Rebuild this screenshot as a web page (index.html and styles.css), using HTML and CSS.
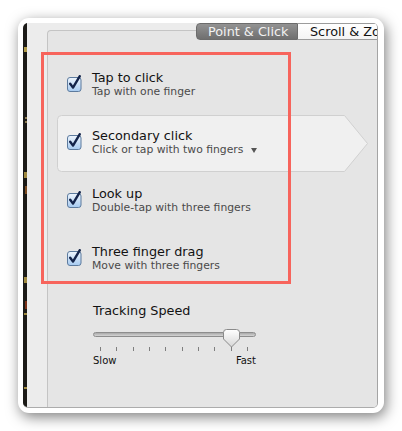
FILE: index.html
```html
<!DOCTYPE html>
<html>
<head>
<meta charset="utf-8">
<link rel="stylesheet" href="styles.css">
</head>
<body>
<div class="frame">
  <div class="window">
    <div class="strip"></div>
    <div class="main">
      <div class="tabs">
        <div class="tab active">Point &amp; Click</div>
        <div class="tab">Scroll &amp; Zoom</div>
      </div>
      <div class="panel">
        <div class="list">
          <div class="row">
            <svg class="cb" width="15" height="17" viewBox="0 0 15 17"><defs><linearGradient id="g1" x1="0" y1="0" x2="0" y2="1"><stop offset="0" stop-color="#eef5fd"/><stop offset="1" stop-color="#a6caf0"/></linearGradient></defs><rect x="0.5" y="2.5" width="13.5" height="14" rx="2.5" fill="url(#g1)" stroke="#5d7b9e"/><path d="M3.2 8.8 L6 12.6 L12.8 1.2" fill="none" stroke="#14244a" stroke-width="2.4" stroke-linecap="round" stroke-linejoin="round"/></svg>
            <div class="txt"><div class="title">Tap to click</div><div class="sub">Tap with one finger</div></div>
          </div>
          <div class="row selected">
            <svg class="cb" width="15" height="17" viewBox="0 0 15 17"><rect x="0.5" y="2.5" width="13.5" height="14" rx="2.5" fill="url(#g1)" stroke="#5d7b9e"/><path d="M3.2 8.8 L6 12.6 L12.8 1.2" fill="none" stroke="#14244a" stroke-width="2.4" stroke-linecap="round" stroke-linejoin="round"/></svg>
            <div class="txt"><div class="title">Secondary click</div><div class="sub">Click or tap with two fingers <span class="caret"></span></div></div>
          </div>
          <div class="row">
            <svg class="cb" width="15" height="17" viewBox="0 0 15 17"><rect x="0.5" y="2.5" width="13.5" height="14" rx="2.5" fill="url(#g1)" stroke="#5d7b9e"/><path d="M3.2 8.8 L6 12.6 L12.8 1.2" fill="none" stroke="#14244a" stroke-width="2.4" stroke-linecap="round" stroke-linejoin="round"/></svg>
            <div class="txt"><div class="title">Look up</div><div class="sub">Double-tap with three fingers</div></div>
          </div>
          <div class="row">
            <svg class="cb" width="15" height="17" viewBox="0 0 15 17"><rect x="0.5" y="2.5" width="13.5" height="14" rx="2.5" fill="url(#g1)" stroke="#5d7b9e"/><path d="M3.2 8.8 L6 12.6 L12.8 1.2" fill="none" stroke="#14244a" stroke-width="2.4" stroke-linecap="round" stroke-linejoin="round"/></svg>
            <div class="txt"><div class="title">Three finger drag</div><div class="sub">Move with three fingers</div></div>
          </div>
        </div>
        <div class="annot"></div>
        <div class="speed">
          <div class="title">Tracking Speed</div>
          <div class="slider">
            <div class="track"></div>
            <svg class="knob" width="17" height="19" viewBox="0 0 17 19"><defs><linearGradient id="kg" x1="0" y1="0" x2="0" y2="1"><stop offset="0" stop-color="#ffffff"/><stop offset="1" stop-color="#d6d6d6"/></linearGradient></defs><path d="M3.5 0.5 H13.5 Q16.5 0.5 16.5 3.5 V10 L8.5 18 L0.5 10 V3.5 Q0.5 0.5 3.5 0.5 Z" fill="url(#kg)" stroke="#8a8a8a"/></svg>
          </div>
          <div class="ticks"><i></i><i></i><i></i><i></i><i></i><i></i><i></i><i></i><i></i><i></i></div>
          <div class="labels"><span>Slow</span><span>Fast</span></div>
        </div>
      </div>
    </div>
  </div>
</div>
</body>
</html>
```
FILE: styles.css
```css
html, body {
  margin: 0;
  padding: 0;
  background: #ffffff;
  width: 402px;
  height: 431px;
  overflow: hidden;
  font-family: "DejaVu Sans", "Liberation Sans", sans-serif;
}

.frame {
  margin: 18px 0 0 18px;
  width: 366px;
  height: 395px;
  box-sizing: border-box;
  padding: 5px 6px 5px 5px;
  background: #ffffff;
  border-radius: 11px;
  box-shadow: 2px 4px 14px rgba(0, 0, 0, 0.5);
}

.window {
  display: flex;
  height: 100%;
  box-sizing: border-box;
  background: #ececec;
  border-right: 1px solid #a4a4a4;
  border-bottom: 1px solid #acacac;
  border-radius: 5px;
  overflow: hidden;
}

.strip {
  width: 4px;
  flex: none;
  background:
    linear-gradient(#b09a48, #b09a48) 1px 24px / 3px 5px no-repeat,
    linear-gradient(#8a7a50, #8a7a50) 2px 94px / 2px 2px no-repeat,
    linear-gradient(#8a7a50, #8a7a50) 2px 98px / 2px 2px no-repeat,
    linear-gradient(#a08a40, #a08a40) 1px 149px / 3px 6px no-repeat,
    linear-gradient(#7a4a20, #7a4a20) 2px 163px / 2px 8px no-repeat,
    linear-gradient(#a08a40, #a08a40) 1px 254px / 3px 6px no-repeat,
    linear-gradient(#7a3018, #7a3018) 2px 278px / 2px 8px no-repeat,
    linear-gradient(#a08a40, #a08a40) 1px 290px / 3px 2px no-repeat,
    linear-gradient(#a08a40, #a08a40) 1px 364px / 3px 2px no-repeat,
    #1b1a17;
}

.main {
  flex: 1;
  display: flex;
  flex-direction: column;
  padding-left: 20px;
  overflow: hidden;
  min-width: 0;
}

.tabs {
  position: relative;
  z-index: 1;
  display: flex;
  height: 17px;
  margin-left: 149px;
  white-space: nowrap;
}

.tab {
  flex: none;
  box-sizing: border-box;
  height: 17px;
  line-height: 16px;
  font-size: 12.8px;
  padding: 0 11px 0 12px;
  color: #111;
  background: linear-gradient(#ffffff, #f4f4f4);
  border: 1px solid #9c9c9c;
  border-left: none;
}

.tab.active {
  width: 102px;
  padding: 0 0 0 11px;
  color: #f2f2f2;
  background: linear-gradient(#939393, #6f6f6f);
  border: 1px solid #6c6c6c;
  border-radius: 4px 0 0 4px;
}

.panel {
  position: relative;
  flex: 1;
  margin-top: -10px;
  background: #e5e5e5;
  border-top: 1px solid #c4c4c4;
  border-left: 1px solid #c4c4c4;
  border-top-left-radius: 4px;
}

.list {
  padding-top: 25px;
}

.row {
  display: flex;
  align-items: center;
  gap: 10px;
  height: 58px;
  margin-left: 9px;
  padding-left: 10px;
  box-sizing: border-box;
}

.row.selected {
  width: 311px;
  background: url("data:image/svg+xml,%3Csvg xmlns='http://www.w3.org/2000/svg' width='311' height='57'%3E%3Cpath d='M4.5 0.5 H287.5 L310.5 28.5 L287.5 56.5 H4.5 Q0.5 56.5 0.5 52.5 V4.5 Q0.5 0.5 4.5 0.5 Z' fill='%23f0f0f0' stroke='%23d0d0d0'/%3E%3C/svg%3E") 0 1px / 311px 57px no-repeat;
}

.cb {
  flex: none;
  display: block;
  margin-top: -3px;
}

.txt {
  margin-top: -2px;
}

.title {
  font-size: 12.8px;
  line-height: 15px;
  color: #121212;
}

.sub {
  font-size: 10.8px;
  line-height: 14px;
  color: #4a4a4a;
  display: flex;
  align-items: center;
}

.caret {
  display: inline-block;
  width: 0;
  height: 0;
  margin-left: 8px;
  margin-top: 1px;
  border-left: 3.5px solid transparent;
  border-right: 3.5px solid transparent;
  border-top: 5px solid #555;
}

.annot {
  position: absolute;
  left: -7px;
  top: 21px;
  width: 250px;
  height: 232px;
  box-sizing: border-box;
  border: 3px solid #f7645c;
}

.speed {
  margin-top: 15px;
  padding-left: 45px;
}

.slider {
  position: relative;
  width: 163px;
  height: 20px;
  margin-top: 9px;
}

.track {
  position: absolute;
  left: 0;
  right: 0;
  top: 5px;
  height: 5px;
  box-sizing: border-box;
  border: 1px solid #8d8d8d;
  border-radius: 3px;
  background: linear-gradient(#a9a9a9, #d4d4d4);
}

.knob {
  position: absolute;
  left: 130px;
  top: 2px;
  display: block;
}

.ticks {
  display: flex;
  justify-content: space-between;
  width: 148px;
  margin-left: 7px;
  height: 4px;
}

.ticks i {
  display: block;
  width: 1px;
  height: 4px;
  background: #7e7e7e;
}

.labels {
  display: flex;
  justify-content: space-between;
  width: 163px;
  margin-top: 4px;
  font-size: 10px;
  line-height: 12px;
  color: #111;
}
```
